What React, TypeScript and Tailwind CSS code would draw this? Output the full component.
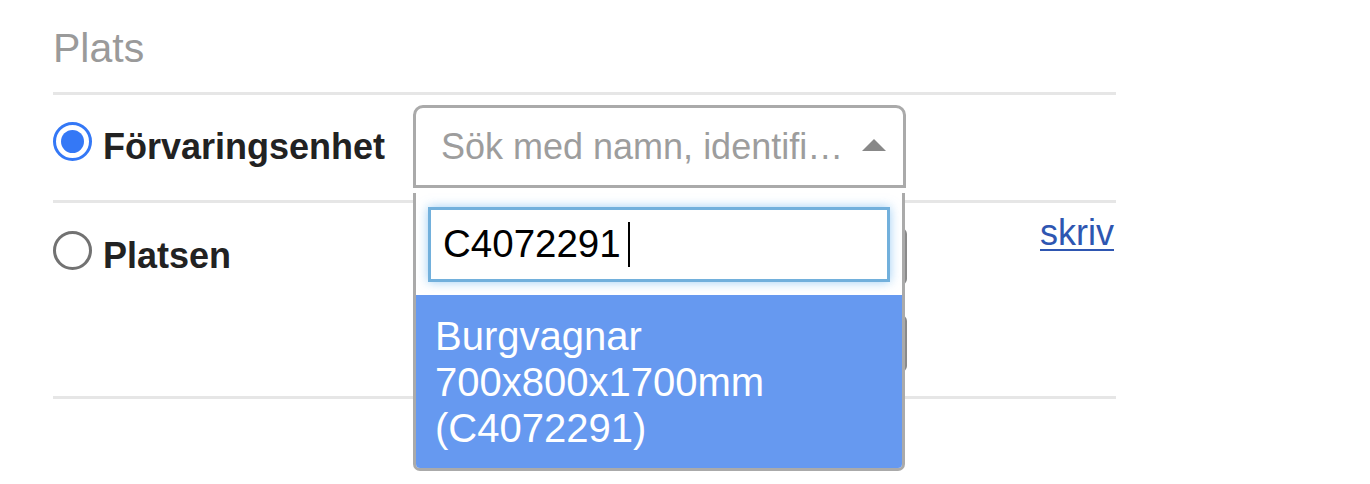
const Radio = ({ checked }: { checked?: boolean }) =>
  checked ? (
    <span className="flex h-[39px] w-[39px] shrink-0 items-center justify-center rounded-full border-[3.5px] border-[#3478f6] bg-white">
      <span className="h-[23px] w-[23px] rounded-full bg-[#3478f6]" />
    </span>
  ) : (
    <span className="block h-[39px] w-[39px] shrink-0 rounded-full border-[3px] border-[#727272] bg-white" />
  );

export default function App() {
  return (
    <div className="min-h-screen bg-white font-['Liberation_Sans',Arial,sans-serif]">
      <div className="ml-[53px] w-[1063px] pt-[28px]">
        <h2 className="text-[41px] leading-none text-[#9a9a9a]">Plats</h2>
        <div className="mt-[23px] h-[3px] bg-[#e6e6e6]" />

        {/* Förvaringsenhet */}
        <div className="flex h-[105px] items-start">
          <label className="flex w-[360px] items-start">
            <span className="mt-[27px]">
              <Radio checked />
            </span>
            <span className="ml-[11px] mt-[34px] text-[36px] font-bold leading-none text-[#222]">
              Förvaringsenhet
            </span>
          </label>

          <div className="relative mt-[10px] w-[493px]">
            <div className="flex h-[83px] items-center rounded-t-[10px] border-[3px] border-[#aaaaaa] bg-white pl-[25px] pr-[17px]">
              <span className="flex-1 whitespace-nowrap text-[36px] leading-none text-[#9d9d9d]">
                Sök med namn, identifi…
              </span>
              <span className="mb-[3px] h-0 w-0 border-x-[12px] border-b-[12px] border-x-transparent border-b-[#888888]" />
            </div>

            {/* open dropdown */}
            <div className="absolute left-0 top-[88px] z-10 w-[492px] overflow-hidden rounded-b-[7px] border-x-[3px] border-b-[3px] border-[#aaaaaa] bg-white pt-[14px]">
              <div className="mx-[12px] flex h-[75px] items-center border-[3px] border-[#72b0dc] bg-white pl-[12px] shadow-[0_0_10px_rgba(82,168,236,0.55)]">
                <span className="text-[38.5px] leading-none text-black">C4072291</span>
                <span className="ml-[7px] h-[45px] w-[2px] bg-black" />
              </div>
              <div className="mt-[13px] bg-[#6699f0] px-[19px] pb-[17px] pt-[18px] text-[40px] leading-[46px] text-white">
                Burgvagnar 700x800x1700mm (C4072291)
              </div>
            </div>
          </div>
        </div>
        <div className="h-[3px] bg-[#e6e6e6]" />

        {/* Platsen */}
        <div className="flex h-[193px] items-start">
          <label className="flex w-[360px] items-start">
            <span className="mt-[28px]">
              <Radio />
            </span>
            <span className="ml-[11px] mt-[35px] text-[36px] font-bold leading-none text-[#222]">
              Platsen
            </span>
          </label>
          <div className="mt-[25px] flex w-[494px] flex-col gap-[30px]">
            <div className="h-[57px] rounded-[6px] border-[3px] border-[#8a8a8a] bg-white" />
            <div className="h-[57px] rounded-[6px] border-[3px] border-[#8a8a8a] bg-white" />
          </div>
          <div className="flex flex-1 justify-end pr-[2px]">
            <a className="mt-[12px] cursor-pointer text-[36px] leading-none text-[#2e56b1] underline decoration-[2px] underline-offset-[4px]">
              skriv
            </a>
          </div>
        </div>
        <div className="h-[3px] bg-[#e6e6e6]" />
      </div>
    </div>
  );
}
